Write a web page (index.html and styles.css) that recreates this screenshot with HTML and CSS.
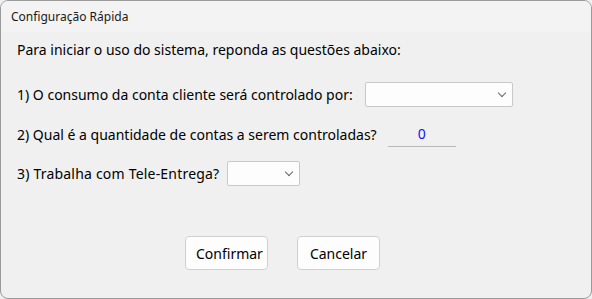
FILE: index.html
```html
<!DOCTYPE html>
<html>
<head>
    <title>Configuração Rápida</title>
    <link rel="stylesheet" href="styles.css">
</head>
<body>
    <div class="window">
        <div class="title-bar">Configuração Rápida</div>
        <div class="content">
            <p class="intro">Para iniciar o uso do sistema, reponda as questões abaixo:</p>

            <div class="question q1">
                <span>1) O consumo da conta cliente será controlado por:</span>
                <div class="select wide"><span class="chevron"></span></div>
            </div>

            <div class="question q2">
                <span>2) Qual é a quantidade de contas a serem controladas?</span>
                <div class="number-field">0</div>
            </div>

            <div class="question q3">
                <span>3) Trabalha com Tele-Entrega?</span>
                <div class="select narrow"><span class="chevron"></span></div>
            </div>

            <div class="buttons">
                <button class="btn confirm">Confirmar</button>
                <button class="btn cancel">Cancelar</button>
            </div>
        </div>
    </div>
</body>
</html>
```

FILE: styles.css
```css
html, body {
    margin: 0;
    padding: 0;
    background: #f0f0f0;
}

body {
    font-family: "Noto Sans", "Open Sans", sans-serif;
    color: #000;
}

.window {
    width: 592px;
    height: 299px;
    box-sizing: border-box;
    border: 1px solid #9a9a9a;
    border-radius: 8px;
    overflow: hidden;
    background: #f0f0f0;
}

.title-bar {
    height: 31px;
    box-sizing: border-box;
    padding: 7px 0 0 10px;
    background: #f3f3f3;
    font-size: 12px;
    color: #1a1a1a;
}

.content {
    padding: 7px 0 0 16px;
    font-size: 14px;
}

.intro {
    margin: 0;
    height: 22px;
    line-height: 22px;
}

.question {
    display: flex;
    align-items: center;
}

.q1 {
    margin-top: 20px;
    height: 26px;
}

.q2 {
    margin-top: 14px;
    height: 26px;
}

.q3 {
    margin-top: 13px;
    height: 26px;
}

.q3 span {
    letter-spacing: 0.2px;
}

.select {
    position: relative;
    height: 25px;
    box-sizing: border-box;
    border: 1px solid #c8c8c8;
    border-radius: 2px;
    background: #fdfdfd;
}

.select.wide {
    width: 148px;
    margin-left: 12px;
}

.select.narrow {
    width: 73px;
    margin-left: 8px;
}

.chevron {
    position: absolute;
    right: 7px;
    top: 7px;
    width: 5px;
    height: 5px;
    border-right: 1px solid #666;
    border-bottom: 1px solid #666;
    transform: rotate(45deg);
}

.number-field {
    width: 68px;
    margin-left: 11px;
    height: 25px;
    box-sizing: border-box;
    border-bottom: 1px solid #b8b8b8;
    color: #1010ff;
    text-align: center;
    line-height: 24px;
}

.buttons {
    display: flex;
    gap: 29px;
    padding-left: 168px;
    margin-top: 50px;
}

.btn {
    height: 34px;
    padding: 0 10px;
    font-family: inherit;
    font-size: 14px;
    border: 1px solid #d0d0d0;
    border-radius: 4px;
    background: #fdfdfd;
    color: #000;
}

.confirm {
    width: 83px;
}

.cancel {
    width: 83px;
}
```
